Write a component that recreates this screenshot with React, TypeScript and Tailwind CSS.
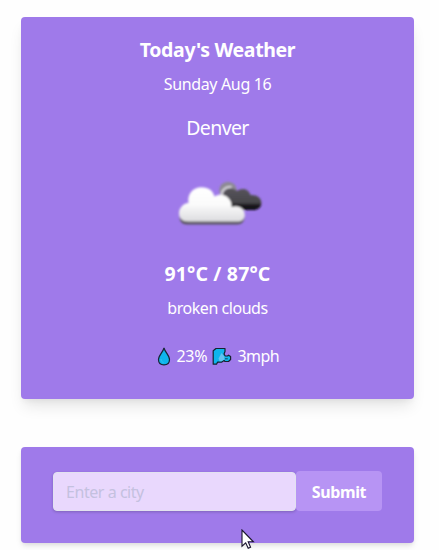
function CloudIcon() {
  return (
    <svg className="block" width="100" height="100" viewBox="0 0 100 100">
      <defs>
        <linearGradient id="front" x1="0" y1="0" x2="0" y2="1">
          <stop offset="0" stopColor="#ffffff" />
          <stop offset="0.5" stopColor="#fbfbfb" />
          <stop offset="1" stopColor="#dcdcdf" />
        </linearGradient>
        <linearGradient id="back" x1="0" y1="0" x2="0" y2="1">
          <stop offset="0" stopColor="#57545b" />
          <stop offset="0.66" stopColor="#48464b" />
          <stop offset="0.78" stopColor="#1b191d" />
          <stop offset="1" stopColor="#0d0b0f" />
        </linearGradient>
        <filter id="soft" x="-10%" y="-10%" width="120%" height="120%">
          <feGaussianBlur stdDeviation="0.8" />
        </filter>
      </defs>
      <g filter="url(#soft)">
        <circle cx="60" cy="37.5" r="8.8" fill="#8d8a93" />
        <path d="M55 56V43C55 35.5 64 32.5 69 38C73 34.5 80.5 35 82.5 42C89 41.5 93.4 45 93.4 50C93.4 54 90 57 86 57H58Z" fill="url(#back)" />
        <path d="M54 44C52.5 37 58 33.5 63.5 34" fill="none" stroke="#dddbe2" strokeWidth="1.8" />
        <path d="M19 71.5C14 71.5 11.5 68 11.5 64H76.5C76.5 68 74 71.5 69 71.5Z" fill="#5b5762" />
        <path d="M20 68.5C14.5 68.5 11 65 11 60.5C11 55 15 50.5 20.5 50C19 41 25 34.3 33.5 34.3C41 34.3 45 38 46.5 43.5C53 39 64 43 63.7 54C71 51.5 76.8 56 76.8 62C76.8 66 74 68.5 69.5 68.5Z" fill="url(#front)" />
      </g>
    </svg>
  );
}

function DropIcon() {
  return (
    <svg className="block shrink-0" width="14" height="19" viewBox="0 0 14 19">
      <path d="M7 1C6 5 1.5 8.5 1.5 12.5C1.5 16 4 17.8 7 17.8S12.5 16 12.5 12.5C12.5 8.5 8 5 7 1Z" fill="#0fb5ec" stroke="#182637" strokeWidth="1.2" />
      <path d="M4 12C4 14 5 15 6.5 15.5" fill="none" stroke="#35c5f2" />
    </svg>
  );
}

function WindIcon() {
  return (
    <svg className="block shrink-0" width="20" height="19" viewBox="0 0 20 19">
      <path d="M1.2 17.2V3.8L4 1.5H13V4.5L12 7L13.2 9H15.5L16.5 8.2L18.6 9.5V12.5L16.5 14.5H13L12 13.5L9.5 15.2H5.5L4.5 17.2Z" fill="#0fb5ec" stroke="#17232f" strokeWidth="1.2" strokeLinejoin="round" />
      <path d="M6.5 11.5L9.5 6L12.3 9.5V12.5L9.5 14.3H7.5Z" fill="#62c2ef" />
      <path d="M13 11.8H15.8" fill="none" stroke="#17435d" />
    </svg>
  );
}

function Cursor() {
  return (
    <svg className="absolute left-[241px] top-[529px]" width="14" height="21" viewBox="0 0 14 21">
      <path d="M1 1V17.2L4.7 13.8L7.2 19.3L9.6 18.2L7.2 12.8H12.4Z" fill="#fff" stroke="#17122b" strokeWidth="1.1" />
    </svg>
  );
}

export default function App() {
  return (
    <main className="relative h-[550px] w-[439px] overflow-hidden bg-[#fefefe] pl-[21px] pt-[17px] font-['Noto_Sans',sans-serif] text-white">
      <section className="flex h-[382px] w-[393px] flex-col items-center rounded bg-[#9f7aea] pt-[19px] shadow-[0_10px_15px_-3px_rgba(0,0,0,0.1),0_4px_6px_-2px_rgba(0,0,0,0.05)]">
        <h1 className="h-7 whitespace-nowrap text-[19.5px] leading-7 font-bold tracking-[-0.35px]">Today's Weather</h1>
        <p className="mt-[8px] h-6 whitespace-nowrap text-base leading-6 tracking-[-0.35px]">Sunday Aug 16</p>
        <h2 className="mt-[18px] h-7 text-[19.5px] leading-7 tracking-[-0.6px]">Denver</h2>
        <div className="mt-[11px] h-[100px]"><CloudIcon /></div>
        <p className="mt-[7px] h-7 whitespace-nowrap text-[19.5px] leading-7 font-bold tracking-[0.15px]">91°C / 87°C</p>
        <p className="mt-[8px] h-6 whitespace-nowrap text-base leading-6 tracking-[-0.45px]">broken clouds</p>
        <div className="mt-6 flex h-6 w-[122px] items-center text-base leading-6 tracking-[-0.3px]">
          <DropIcon />
          <span className="ml-[6px] w-[31px] shrink-0 whitespace-nowrap">23%</span>
          <span className="ml-[4px] shrink-0"><WindIcon /></span>
          <span className="ml-[6px] shrink-0 whitespace-nowrap tracking-[-0.6px]">3mph</span>
        </div>
      </section>
      <section className="mt-12 flex h-24 w-[393px] items-start rounded bg-[#9f7aea] px-8 pt-6 shadow-[0_4px_6px_-1px_rgba(0,0,0,0.1),0_2px_4px_-1px_rgba(0,0,0,0.06)]">
        <input className="mt-px h-[39px] w-[243px] rounded border border-[#e2e2ef] bg-[#e9d8fd] px-3 pt-px text-base tracking-[-0.45px] text-[#4a5568] shadow-[0_1px_3px_rgba(0,0,0,0.2)] outline-none placeholder:text-[#c4c1df]" placeholder="Enter a city" />
        <button className="h-10 w-[86px] rounded bg-[#b794f4] pt-[2px] text-base font-bold tracking-[-0.4px]">Submit</button>
      </section>
      <Cursor />
    </main>
  );
}
